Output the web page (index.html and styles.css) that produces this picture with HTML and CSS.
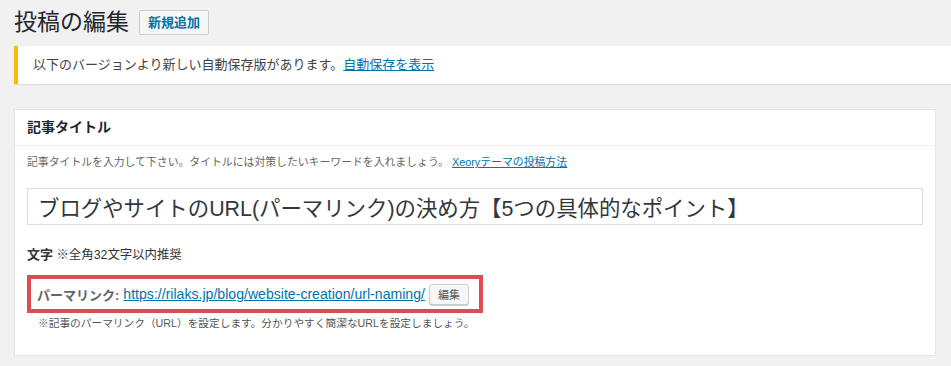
FILE: index.html
```html
<!DOCTYPE html>
<html lang="ja">

<head>
    <meta charset="UTF-8" />
    <title>投稿の編集</title>
    <link rel="stylesheet" href="styles.css">
</head>

<body>
    <div class="wrap">
        <div class="page-head">
            <h1 class="page-title">投稿の編集</h1>
            <a class="add-new" href="#">新規追加</a>
        </div>

        <div class="notice">
            以下のバージョンより新しい自動保存版があります。<a href="#">自動保存を表示</a>
        </div>

        <div class="card">
            <div class="card-head">記事タイトル</div>
            <div class="card-body">
                <p class="desc">記事タイトルを入力して下さい。タイトルには対策したいキーワードを入れましょう。 <a href="#">Xeoryテーマの投稿方法</a></p>
                <input class="title-input" type="text" value="ブログやサイトのURL(パーマリンク)の決め方【5つの具体的なポイント】" />
                <p class="count"><b>文字</b> ※全角32文字以内推奨</p>
                <div class="permalink">
                    <span class="permalink-label">パーマリンク:</span>
                    <a class="permalink-url" href="#">https://rilaks.jp/blog/website-creation/url-naming/</a>
                    <button class="edit-btn" type="button">編集</button>
                </div>
                <p class="hint">※記事のパーマリンク（URL）を設定します。分かりやすく簡潔なURLを設定しましょう。</p>
            </div>
        </div>
    </div>
</body>

</html>
```

FILE: styles.css
```css
* {
    margin: 0;
    padding: 0;
    box-sizing: border-box;
}

body {
    background: #f1f1f1;
    color: #444;
    font-family: "Liberation Sans", "Noto Sans CJK JP", sans-serif;
    font-size: 13px;
    overflow: hidden;
}

a {
    color: #0073aa;
}

.wrap {
    padding: 8px 0 0 14px;
}

.page-head {
    display: flex;
    align-items: center;
    gap: 10px;
    height: 29px;
}

.page-title {
    font-size: 23px;
    font-weight: 400;
    line-height: 29px;
    color: #23282d;
}

.add-new {
    display: block;
    height: 25px;
    padding: 0 8px;
    line-height: 23px;
    font-size: 13px;
    font-weight: 600;
    text-decoration: none;
    background: #f7f7f7;
    border: 1px solid #ccc;
    border-radius: 2px;
}

.notice {
    margin-top: 9px;
    height: 38px;
    line-height: 38px;
    padding-left: 15px;
    background: #fff;
    border-left: 4px solid #ffb900;
    box-shadow: 0 1px 1px rgba(0, 0, 0, 0.08);
    font-size: 13px;
}

.card {
    margin-top: 25px;
    width: 922px;
    height: 247px;
    background: #fff;
    border: 1px solid #e5e5e5;
    box-shadow: 0 1px 1px rgba(0, 0, 0, 0.04);
}

.card-head {
    height: 36px;
    line-height: 35px;
    padding-left: 12px;
    font-size: 14px;
    font-weight: 700;
    color: #23282d;
    border-bottom: 1px solid #eee;
}

.card-body {
    padding: 0 12px;
}

.desc {
    margin-top: 8px;
    line-height: 16px;
    font-size: 10.85px;
    color: #666;
}

.title-input {
    display: block;
    margin-top: 18px;
    width: 896px;
    height: 37px;
    padding: 0 10px;
    border: 1px solid #ddd;
    font-family: "Liberation Sans", "Noto Sans CJK JP", sans-serif;
    font-size: 21.4px;
    color: #32373c;
    outline: none;
}

.count {
    margin-top: 21px;
    line-height: 18px;
    font-size: 12.4px;
    color: #333;
}

.count b {
    font-size: 13px;
}

.permalink {
    display: flex;
    align-items: center;
    margin-top: 11px;
    width: 456px;
    height: 38px;
    padding-left: 6px;
    border: 4px solid #de4b50;
    font-size: 13px;
}

.permalink-label {
    font-weight: 700;
    color: #666;
    margin-right: 4px;
}

.permalink-url {
    font-size: 14.1px;
}

.edit-btn {
    margin-left: 4px;
    height: 21px;
    padding: 0 8px;
    font-family: "Liberation Sans", "Noto Sans CJK JP", sans-serif;
    font-size: 11px;
    color: #555;
    background: #f7f7f7;
    border: 1px solid #ccc;
    border-radius: 3px;
    box-shadow: 0 1px 0 #ccc;
}

.hint {
    margin-top: 3px;
    padding-left: 11px;
    line-height: 14px;
    font-size: 10.7px;
    color: #555;
}
```
